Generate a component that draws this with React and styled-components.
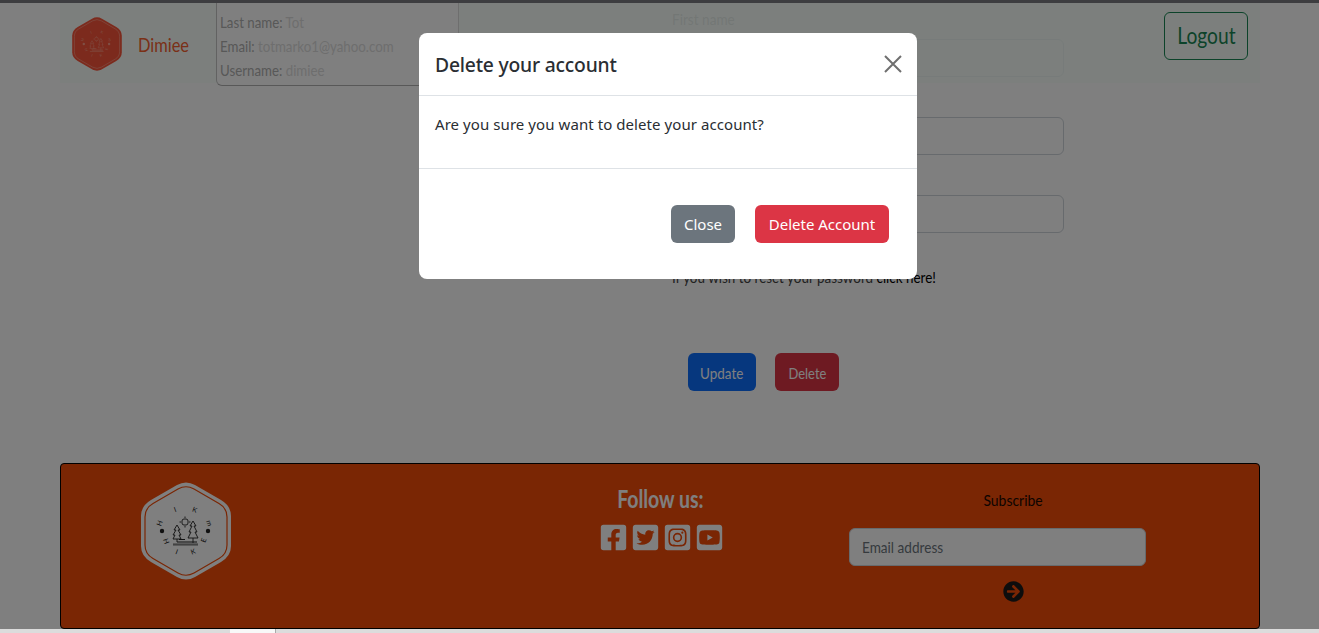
import React from "react";
import styled, { createGlobalStyle } from "styled-components";
import { FaFacebookSquare, FaTwitterSquare, FaInstagramSquare, FaYoutubeSquare, FaArrowCircleRight } from "react-icons/fa";

const Global = createGlobalStyle`
  html, body { margin: 0; padding: 0; height: 100%; overflow: hidden; background: #fff; }
  * { box-sizing: border-box; }
  body { font-family: "Lato", "Liberation Sans", sans-serif; }
`;

const Narrow = styled.span`
  display: inline-block;
  white-space: nowrap;
  transform: scaleX(${(p) => p.$s});
  transform-origin: ${(p) => p.$o || "center"};
`;
const Page = styled.div`
  height: 633px;
  display: flex;
  flex-direction: column;
  overflow: hidden;
  position: relative;
`;
const TopBar = styled.div`
  height: 3px;
  flex: none;
  background: #7a7a80;
`;
const Navbar = styled.header`
  flex: none;
  height: 80px;
  margin: 0 59px 0 60px;
  padding: 0 12px;
  background: rgba(246, 255, 250, 0.8);
  display: flex;
  align-items: flex-start;
  position: relative;
  z-index: 1;
`;
const Brand = styled.div`
  display: flex;
  align-items: center;
  gap: 16px;
  width: 145px;
  height: 80px;
  padding-top: 2px;
`;
const BrandName = styled.span`
  font-size: 20px;
  color: #f5602f;
`;
const InfoCard = styled.div`
  width: 243px;
  height: 83px;
  padding: 7px 3px;
  margin: 0 0 -3px -1px;
  background: #fff;
  border-left: 1px solid #c4c4c4;
  border-bottom: 1px solid #b0b0b0;
  border-right: 1px solid #ddd;
  border-radius: 0 0 6px 6px;
  font-size: 16px;
  line-height: 24px;
  color: #b0b0b0;
`;
const InfoLine = styled.div`
  height: 24px;
`;
const Muted = styled.span`
  color: #dcdcdc;
`;
const Logout = styled.button`
  margin: 9px 0 0 auto;
  width: 84px;
  height: 48px;
  background: transparent;
  border: 1px solid #198754;
  border-radius: 6px;
  color: #198754;
  font: 24px "Lato", sans-serif;
  padding: 0 0 3px;
`;
const Main = styled.main`
  flex: none;
  height: 453px;
  margin-top: -73px;
  padding-left: 672px;
`;
const Label = styled.label`
  display: block;
  height: ${(p) => (p.$first ? 29 : 20)}px;
  font-size: 16px;
  line-height: 18px;
  color: #aaa;
`;
const Field = styled.div`
  width: 392px;
  height: 38px;
  margin-bottom: 20px;
  background: #fff;
  border: 1px solid #ced4da;
  border-radius: 6px;
`;
const ResetLine = styled.p`
  margin: 35px 0 0;
  height: 18px;
  font-size: 16px;
  line-height: 18px;
  color: #444;
`;
const ResetLink = styled.a`
  color: #000;
`;
const FormActions = styled.div`
  display: flex;
  gap: 19px;
  margin: 67px 0 0 16px;
`;
const Solid = styled.button`
  height: 38px;
  width: ${(p) => p.$w}px;
  border: 0;
  padding: 0;
  border-radius: 6px;
  background: ${(p) => p.$bg};
  color: #fff;
  font: 16px "Lato", sans-serif;
`;
const Footer = styled.footer`
  flex: none;
  height: 166px;
  margin: 0 59px 0 60px;
  background: #f44c08;
  border: 1px solid #000;
  border-radius: 4px;
  display: grid;
  grid-template-columns: 530px 138px 1fr;
`;
const FooterLogo = styled.div`
  padding: 18px 0 0 80px;
`;
const Follow = styled.div`
  padding-top: 19px;
  text-align: center;
`;
const FollowTitle = styled.h3`
  margin: 0 0 8px;
  font: 700 24px/32px "Lato", sans-serif;
  color: #fff;
`;
const Socials = styled.div`
  display: flex;
  justify-content: center;
  gap: 2.7px;
  padding-left: 3px;
  color: #fff;
  font-size: 29px;
  line-height: 0;
`;
const Subscribe = styled.div`
  padding: 26px 0 0 120px;
  width: 448px;
  display: flex;
  flex-direction: column;
  align-items: center;
`;
const SubTitle = styled.div`
  font-size: 16px;
  line-height: 20px;
  color: #1a0802;
  margin-bottom: 18px;
`;
const EmailBox = styled.div`
  align-self: flex-start;
  width: 297px;
  height: 38px;
  padding-left: 12px;
  background: #fff;
  border: 1px solid #ced4da;
  border-radius: 6px;
  font-size: 16px;
  line-height: 36px;
  color: #6c757d;
`;
const ArrowBtn = styled.div`
  margin-top: 15px;
  color: #1a1a1a;
  font-size: 21px;
  line-height: 0;
`;
const Backdrop = styled.div`
  position: absolute;
  inset: 0 0 4px 0;
  background: rgba(0, 0, 0, 0.5);
  z-index: 5;
`;
const BottomStrip = styled.div`
  flex: none;
  height: 4px;
  margin-top: auto;
  background: #dcdcdc;
  padding-left: 230px;
`;
const StripThumb = styled.div`
  width: 46px;
  height: 4px;
  background: #f8f8f8;
  border-right: 1px solid #aaa;
`;
const Modal = styled.div`
  position: absolute;
  top: 33px;
  left: 419px;
  width: 498px;
  height: 246px;
  background: #fff;
  border-radius: 8px;
  z-index: 6;
  font-family: "Noto Sans", "Open Sans", sans-serif;
  color: #2a2e33;
  display: flex;
  flex-direction: column;
`;
const ModalHeader = styled.div`
  height: 63px;
  flex: none;
  padding: 0 15px 0 16px;
  border-bottom: 1px solid #dee2e6;
  display: flex;
  align-items: center;
  justify-content: space-between;
`;
const ModalTitle = styled.h5`
  margin: 0;
  font-size: 19.3px;
  font-weight: 500;
  line-height: 1.5;
  letter-spacing: -0.2px;
  padding-top: 3px;
`;
const CloseX = styled.svg`
  width: 18px;
  height: 18px;
  margin-bottom: 1px;
`;
const ModalBody = styled.div`
  height: 73px;
  flex: none;
  padding: 16px;
  font-size: 15px;
  line-height: 24px;
  letter-spacing: 0.07px;
  border-bottom: 1px solid #dee2e6;
`;
const ModalFooter = styled.div`
  flex: 1;
  display: flex;
  justify-content: flex-end;
  gap: 20px;
  padding: 36px 28px 0 0;
`;
const ModalBtn = styled.button`
  height: 38px;
  width: ${(p) => p.$w}px;
  border: 0;
  padding: 0;
  border-radius: 6px;
  background: ${(p) => p.$bg};
  color: #fff;
  font: 15px "Noto Sans", sans-serif;
`;

function Hex({ size, h, stroke, fill, detail }) {
  return (
    <svg width={size} height={h} viewBox="0 0 90 98">
      <path d="M36 3 Q45 -2 54 3 L80 18 Q90 24 90 34 L90 64 Q90 74 80 80 L54 95 Q45 100 36 95 L10 80 Q0 74 0 64 L0 34 Q0 24 10 18 Z" fill={fill} />
      <path d="M37 7 Q45 2.5 53 7 L78 21.5 Q86 26 86 35 L86 63 Q86 72 78 76.5 L53 91 Q45 95.5 37 91 L12 76.5 Q4 72 4 63 L4 35 Q4 26 12 21.5 Z" fill="none" stroke={stroke} strokeWidth="1.2" />
      <g fill="none" stroke={detail} strokeWidth="0.9">
        <path d="M36 43 l-3 5 l2 0 l-3 5 l2 0 l-2 4 l8 0 l-2 -4 l2 0 l-3 -5 l2 0 Z" />
        <path d="M52 39 l-3 5 l2 0 l-3 6 l2 0 l-3 6 l10 0 l-3 -6 l2 0 l-3 -6 l2 0 Z" />
        <path d="M52 56 V61" />
        <path d="M36 57 V60" />
        <rect x="41" y="37" width="6" height="6" rx="2" />
        <path d="M44 34.5 v1.5 M44 44 v1.5 M38.5 40 h1.5 M48 40 h1.5" />
        <path d="M36 60 H56 M38 57.5 H44" strokeWidth="1.2" />
        <path d="M32 62.5 H57" strokeWidth="2.2" opacity=".55" />
      </g>
      <circle cx="21" cy="49" r="2.2" fill={detail} />
      <circle cx="67" cy="49" r="2.2" fill={detail} />
      <g fill={detail} fontFamily="Lato, sans-serif" fontSize="7" textAnchor="middle">
        <text x="35" y="30" transform="rotate(-20 35 30)">I</text>
        <text x="53" y="30" transform="rotate(20 53 30)">K</text>
        <text x="21" y="42" transform="rotate(-70 21 42)">H</text>
        <text x="66" y="42" transform="rotate(70 66 42)">m</text>
        <text x="23" y="60" transform="rotate(70 23 60)">H</text>
        <text x="65" y="59" transform="rotate(-70 65 59)">E</text>
        <text x="35" y="72" transform="rotate(20 35 72)">I</text>
        <text x="53" y="72" transform="rotate(-20 53 72)">K</text>
      </g>
    </svg>
  );
}

export default function App() {
  return (
    <Page>
      <Global />
      <TopBar />
      <Navbar>
        <Brand>
          <Hex size={50} h={54} fill="#f8553a" stroke="#ff9c88" detail="#ff9c88" />
          <BrandName><Narrow $s={0.82} $o="left">Dimiee</Narrow></BrandName>
        </Brand>
        <InfoCard>
          <InfoLine><Narrow $s={0.83} $o="left">Last name: <Muted>Tot</Muted></Narrow></InfoLine>
          <InfoLine><Narrow $s={0.83} $o="left">Email: <Muted>totmarko1@yahoo.com</Muted></Narrow></InfoLine>
          <InfoLine><Narrow $s={0.83} $o="left">Username: <Muted>dimiee</Muted></Narrow></InfoLine>
        </InfoCard>
        <Logout><Narrow $s={0.8}>Logout</Narrow></Logout>
      </Navbar>
      <Main>
        <Label $first><Narrow $s={0.85} $o="left">First name</Narrow></Label>
        <Field />
        <Label><Narrow $s={0.85} $o="left">Last name</Narrow></Label>
        <Field />
        <Label><Narrow $s={0.85} $o="left">Username</Narrow></Label>
        <Field />
        <ResetLine><Narrow $s={0.84} $o="left">If you wish to reset your password <ResetLink>click here!</ResetLink></Narrow></ResetLine>
        <FormActions>
          <Solid $w={68} $bg="#0d6efd"><Narrow $s={0.84}>Update</Narrow></Solid>
          <Solid $w={64} $bg="#dc3545"><Narrow $s={0.81}>Delete</Narrow></Solid>
        </FormActions>
      </Main>
      <Footer>
        <FooterLogo>
          <Hex size={90} h={98} fill="#fff" stroke="#f44c08" detail="#222" />
        </FooterLogo>
        <Follow>
          <FollowTitle><Narrow $s={0.81}>Follow us:</Narrow></FollowTitle>
          <Socials>
            <FaFacebookSquare />
            <FaTwitterSquare />
            <FaInstagramSquare />
            <FaYoutubeSquare />
          </Socials>
        </Follow>
        <Subscribe>
          <SubTitle><Narrow $s={0.87}>Subscribe</Narrow></SubTitle>
          <EmailBox><Narrow $s={0.85} $o="left">Email address</Narrow></EmailBox>
          <ArrowBtn><FaArrowCircleRight /></ArrowBtn>
        </Subscribe>
      </Footer>
      <BottomStrip><StripThumb /></BottomStrip>
      <Backdrop />
      <Modal>
        <ModalHeader>
          <ModalTitle>Delete your account</ModalTitle>
          <CloseX viewBox="0 0 18 18">
            <path d="M1 1 L17 17 M17 1 L1 17" stroke="#6f6f6f" strokeWidth="2" fill="none" />
          </CloseX>
        </ModalHeader>
        <ModalBody>Are you sure you want to delete your account?</ModalBody>
        <ModalFooter>
          <ModalBtn $w={64} $bg="#6c757d">Close</ModalBtn>
          <ModalBtn $w={134} $bg="#dc3545">Delete Account</ModalBtn>
        </ModalFooter>
      </Modal>
    </Page>
  );
}
